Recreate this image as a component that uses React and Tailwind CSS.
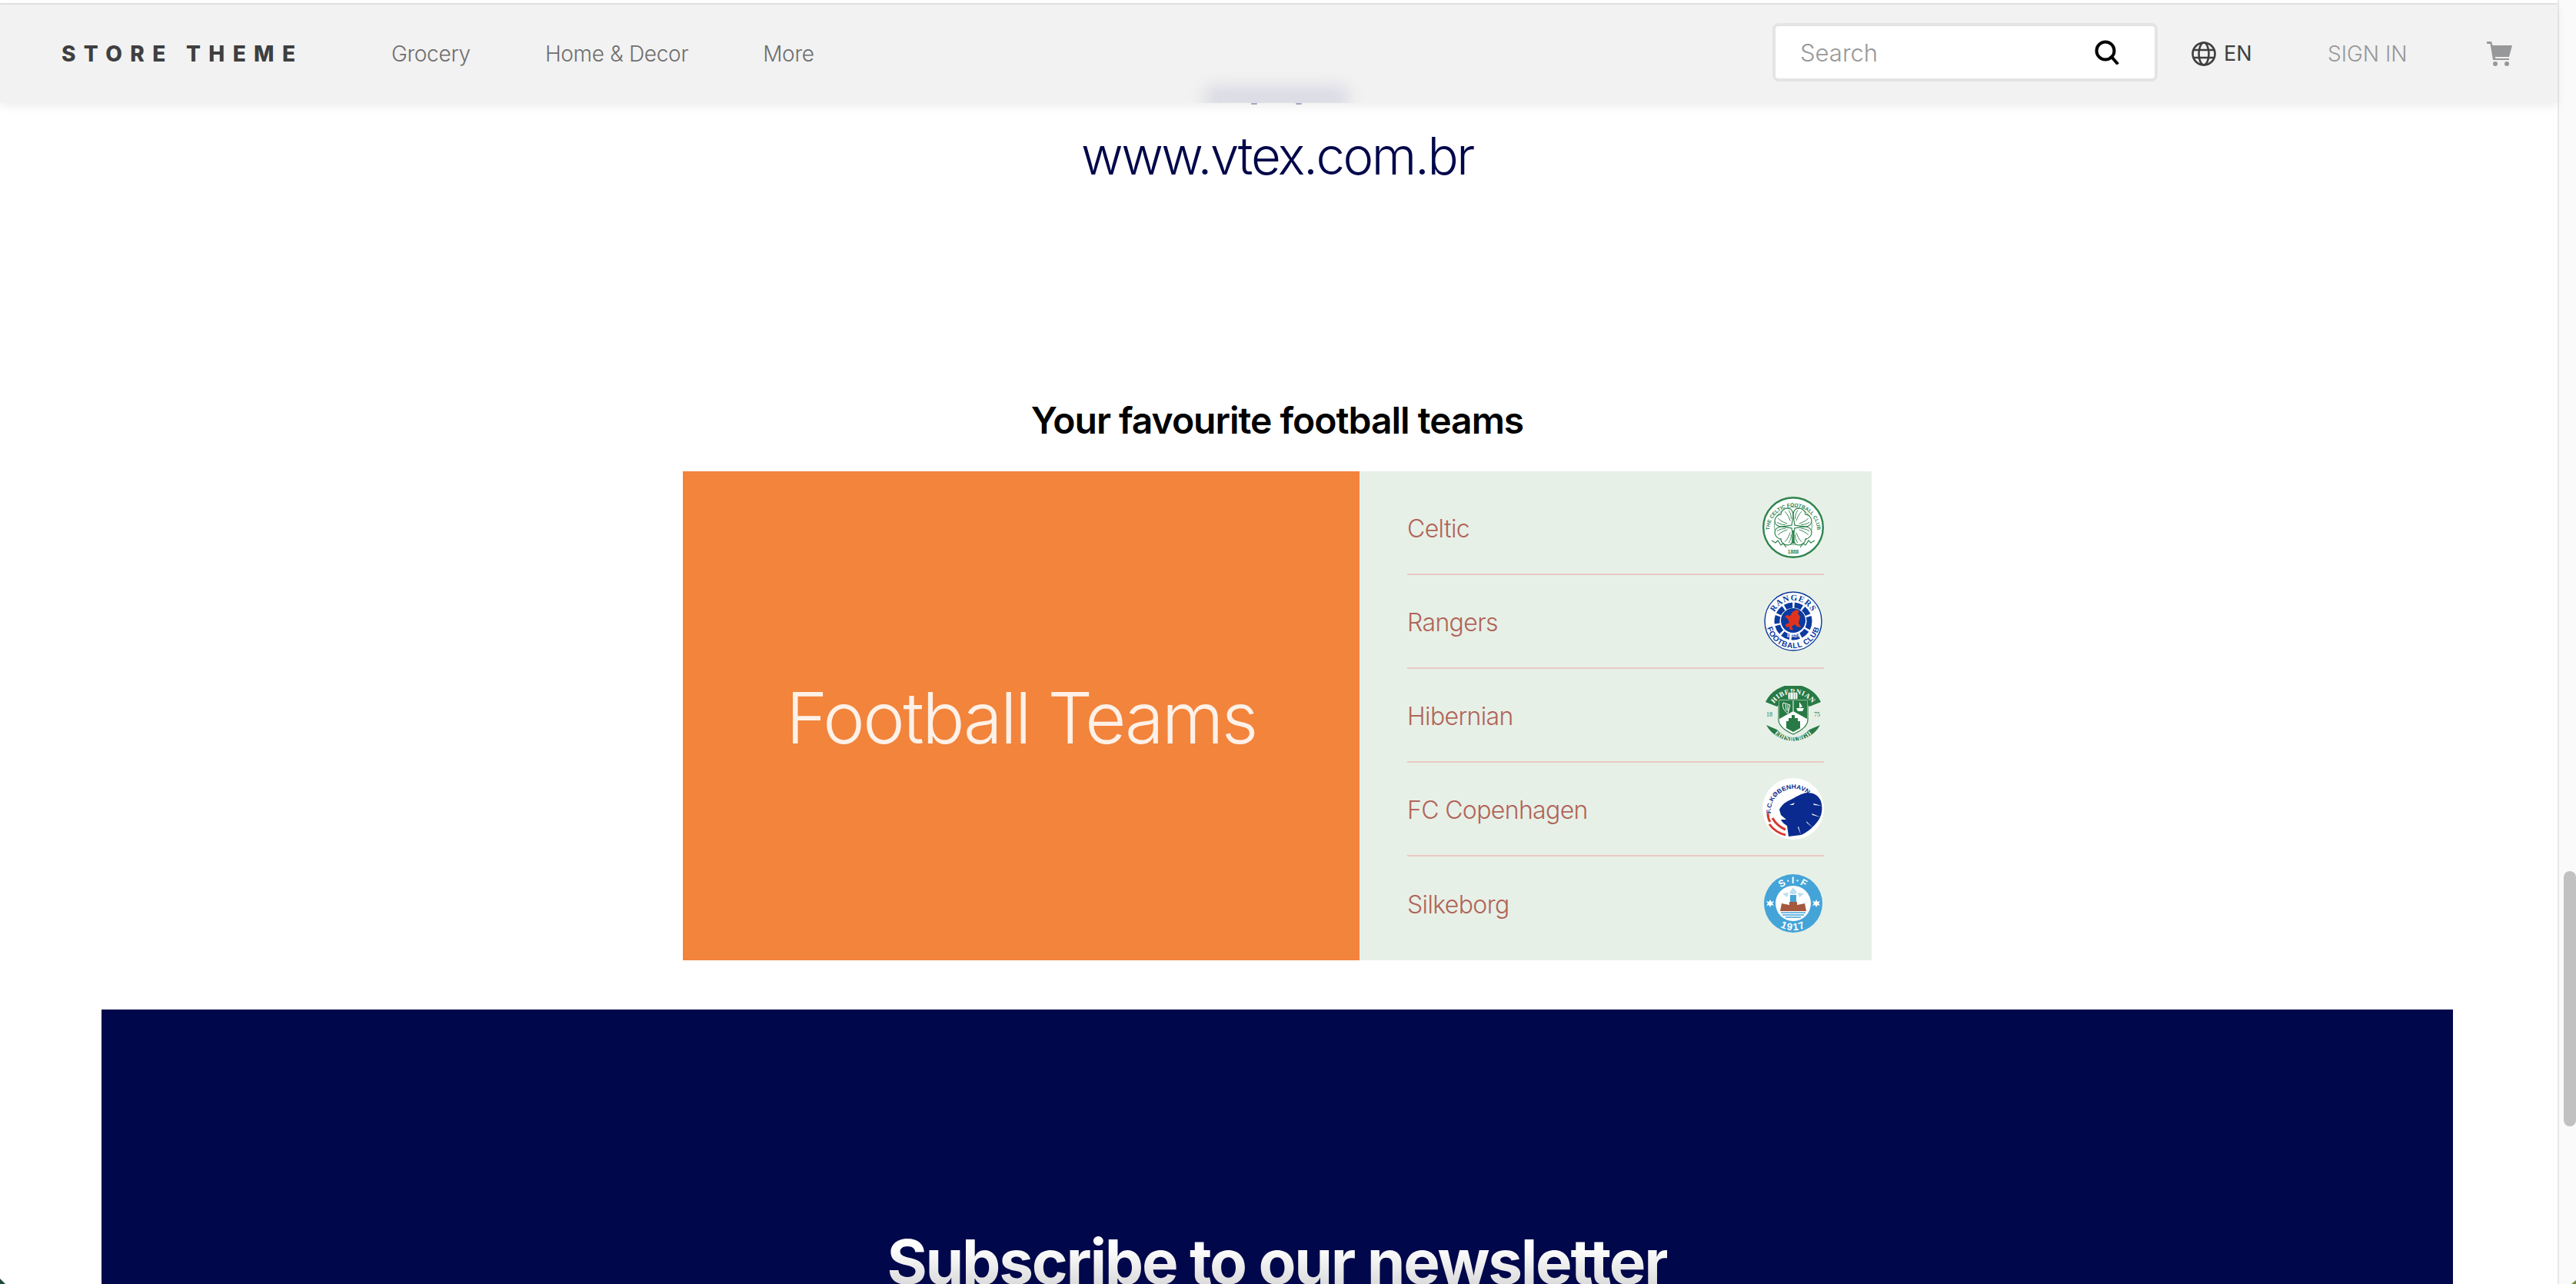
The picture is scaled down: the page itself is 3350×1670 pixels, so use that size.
const font = { fontFamily: 'Inter, "Liberation Sans", sans-serif' }

const navLinks = ['Grocery', 'Home & Decor', 'More']

function CelticLogo() {
  const green = '#2f8450'
  return (
    <svg viewBox="0 0 80 80" className="w-[80px] h-[80px]">
      <defs>
        <path id="celticTop" d="M 9 44 A 31 31 0 1 1 71 44" />
      </defs>
      <circle cx="40" cy="40" r="38.8" fill="#fff" stroke={green} strokeWidth="2.4" />
      <circle cx="40" cy="38" r="24.5" fill="#fff" stroke={green} strokeWidth="0.7" />
      <text fontSize="6.6" fontWeight="700" fill={green} fontFamily="Liberation Sans"><textPath href="#celticTop" startOffset="50%" textAnchor="middle">THE CELTIC FOOTBALL CLUB</textPath></text>
      <text x="40" y="74" textAnchor="middle" fontSize="6.5" fontWeight="700" fill={green} fontFamily="Liberation Sans">1888</text>
      {[-45, 45, 135, -135].map(r => (
        <g key={r} transform={`translate(40 39) rotate(${r}) scale(0.9)`} fill="#fff" stroke={green} strokeWidth="1.3">
          <path d="M0 -3 C-6 -8 -17 -13 -15 -21 C-13 -28 -4 -29 0 -25 C4 -29 13 -28 15 -21 C17 -13 6 -8 0 -3 Z" />
          <path d="M-3 -9 C-5 -14 -7 -18 -7 -24 M3 -9 C5 -14 7 -18 7 -24 M-6 -10 C-9 -13 -11 -16 -12 -21 M6 -10 C9 -13 11 -16 12 -21" fill="none" strokeWidth="1" />
        </g>
      ))}
      <path d="M38.8 44 L38 61 L42 61 L41.2 44 Z" fill={green} />
      <path d="M12 57 L17 60 L20 57 L24 63 L27 61 L31 66 M68 57 L63 60 L60 57 L56 63 L53 61 L49 66" fill="none" stroke={green} strokeWidth="1.2" />
    </svg>
  )
}

function RangersLogo() {
  const blue = '#0b3a9e'
  return (
    <svg viewBox="0 0 76 78" className="w-[76px] h-[78px]">
      <defs>
        <path id="rangersTop" d="M 11 39 A 27 27 0 0 1 65 39" />
        <path id="rangersBottom" d="M 3 39 A 35 35 0 0 0 73 39" />
      </defs>
      <ellipse cx="38" cy="39" rx="37" ry="38" fill="#fff" stroke={blue} strokeWidth="1.4" />
      <text fontSize="11" fontWeight="700" fill={blue} fontFamily="Liberation Serif" letterSpacing="1"><textPath href="#rangersTop" startOffset="50%" textAnchor="middle">RANGERS</textPath></text>
      <text fontSize="10" fontWeight="700" fill={blue} fontFamily="Liberation Sans" letterSpacing="0.6"><textPath href="#rangersBottom" startOffset="50%" textAnchor="middle">FOOTBALL CLUB</textPath></text>
      <circle cx="38" cy="39" r="21" fill="none" stroke={blue} strokeWidth="7" strokeDasharray="10 2.5" />
      <circle cx="38" cy="38" r="16" fill={blue} />
      <path d="M42 24 L46 26 L44 29 L47 33 L45 41 L48 47 L43 46 L40 43 L36 46 L38 50 L33 50 L33 46 L29 47 L28 43 L33 41 L31 36 L27 33 L30 31 L34 32 L37 27 Z" fill="#e0331f" />
      <text x="38" y="60" textAnchor="middle" fontSize="4.6" fontWeight="700" fill="#fff" fontFamily="Liberation Sans">READY</text>
    </svg>
  )
}

function HibernianLogo() {
  const green = '#277a45'
  return (
    <svg viewBox="0 0 74 76" className="w-[74px] h-[76px]">
      <defs>
        <path id="hibsTop" d="M 7 40 A 30 30 0 0 1 67 40" />
        <path id="hibsBottom" d="M 1 36 A 36 36 0 0 0 73 36" />
      </defs>
      <path d="M1 21 A 40 40 0 0 1 73 21 L58 27 A 27 27 0 0 0 16 27 Z" fill={green} />
      <path d="M2 51 L16 57 A 27 27 0 0 0 58 57 L72 51 A 40 40 0 0 1 2 51 Z" fill={green} />
      <text fontSize="9" fontWeight="700" fill="#fff" fontFamily="Liberation Serif" letterSpacing="0.7"><textPath href="#hibsTop" startOffset="50%" textAnchor="middle">HIBERNIAN</textPath></text>
      <text fontSize="8" fontWeight="700" fill="#fff" fontFamily="Liberation Serif" letterSpacing="0.5"><textPath href="#hibsBottom" startOffset="50%" textAnchor="middle">EDINBURGH</textPath></text>
      <text x="6" y="40" textAnchor="middle" fontSize="8" fill={green} fontFamily="Liberation Serif">18</text>
      <text x="68" y="40" textAnchor="middle" fontSize="8" fill={green} fontFamily="Liberation Serif">75</text>
      <path d="M18 18 L56 18 L56 44 C56 53 46 59 37 63 C28 59 18 53 18 44 Z" fill="#fff" stroke={green} strokeWidth="1.2" />
      <path d="M19 19 L55 19 L55 43 L37 33 L19 43 Z" fill={green} />
      <path d="M36.5 19 H37.5 V33 H36.5 Z" fill="#fff" />
      <path d="M24 22 C22 28 26 33 30 36 L33 25 Z M27 24 L28 32 M30 25 L30 33" fill="none" stroke="#fff" strokeWidth="1" />
      <path d="M41 29 L51 29 L49 33 L43 33 Z M45 21 L45 29 L49 27 Z" fill="#fff" />
      <path d="M28 46 L31 46 L31 42 L35 42 L35 38 L39 38 L39 42 L43 42 L43 46 L46 46 L46 55 L37 60 L28 55 Z" fill={green} />
      <rect x="30" y="8" width="13" height="10" rx="2" fill="#fff" stroke={green} strokeWidth="1" />
      <path d="M33 8 V18 M37 8 V18 M40 8 V18" stroke={green} strokeWidth="0.7" />
    </svg>
  )
}

function CopenhagenLogo() {
  const blue = '#0a2a8f'
  return (
    <svg viewBox="0 0 80 80" className="w-[80px] h-[80px]">
      <defs>
        <path id="fckTop" d="M 11 46 A 29 29 0 0 1 69 40" />
      </defs>
      <circle cx="40" cy="40" r="40" fill="#fff" />
      <text fontSize="8" fontWeight="700" fill={blue} fontFamily="Liberation Sans"><textPath href="#fckTop" textLength="70" lengthAdjust="spacingAndGlyphs">F.C.KØBENHAVN</textPath></text>
      <path d="M58 19 C66 19 73 22 76 30 C79 40 77 50 72 56 C66 64 58 71 50 74 L34 76 L32 62 C29 60 25 57 24 54 L31 54 L24 48 L22 41 C25 35 30 31 35 29 C43 25 50 20 58 19 Z" fill={blue} />
      <path d="M35 35 L42 32 L40 35 Z M66 33 L77 36 L67 35 Z M64 46 L76 51 L65 48 Z M57 56 L66 65 L57.5 58 Z M47 63 L50 74 L46 64 Z" fill="#fff" />
      <path d="M7 46 C7 49 8 54 10 57 M13 52 C17 59 23 64 30 67 M9 60 C14 67 22 72 30 74" stroke="#d63a2f" strokeWidth="3" fill="none" />
    </svg>
  )
}

function SilkeborgLogo() {
  return (
    <svg viewBox="0 0 76 76" className="w-[76px] h-[76px]">
      <defs>
        <path id="sifTop" d="M 12 38 A 26 26 0 0 1 64 38" />
        <path id="sifBottom" d="M 3 38 A 35 35 0 0 0 73 38" />
      </defs>
      <circle cx="38" cy="38" r="38" fill="#44a4d8" />
      <circle cx="38" cy="38" r="23" fill="#fff" />
      <text fontSize="12.5" fontWeight="700" fill="#fff" fontFamily="Liberation Sans" letterSpacing="1.5"><textPath href="#sifTop" startOffset="50%" textAnchor="middle">S·I·F</textPath></text>
      <text fontSize="13" fontWeight="700" fill="#fff" fontFamily="Liberation Sans" letterSpacing="1.5"><textPath href="#sifBottom" startOffset="50%" textAnchor="middle">1917</textPath></text>
      <path d="M8 33 L9.5 36 L13 35 L11 38 L13 41 L9.5 40 L8 43 L6.5 40 L3 41 L5 38 L3 35 L6.5 36 Z" fill="#fff" />
      <path d="M68 33 L69.5 36 L73 35 L71 38 L73 41 L69.5 40 L68 43 L66.5 40 L63 41 L65 38 L63 35 L66.5 36 Z" fill="#fff" />
      <path d="M38 17 L43 24 L40 26 L36 26 L33 24 Z M24 25 L32 24 L30 30 Z M52 25 L44 24 L46 30 Z" fill="#b9def2" />
      <rect x="34" y="27" width="8" height="9" fill="#44a4d8" />
      <path d="M23 38 L33 40 L33 36 L43 36 L43 40 L53 38 L55 48 L21 48 Z" fill="#a4593f" />
      <path d="M22 50 H54 M24 53 H52 M28 56 H48" stroke="#44a4d8" strokeWidth="1.5" />
    </svg>
  )
}

const teams = [
  { name: 'Celtic', logo: <CelticLogo /> },
  { name: 'Rangers', logo: <RangersLogo /> },
  { name: 'Hibernian', logo: <HibernianLogo /> },
  { name: 'FC Copenhagen', logo: <CopenhagenLogo /> },
  { name: 'Silkeborg', logo: <SilkeborgLogo /> },
]

function Header() {
  return (
    <header className="relative z-10 h-[128px] shrink-0 bg-[#f2f2f2] flex items-center pl-[80px] pr-[59px] shadow-[0_4px_12px_rgba(0,0,0,0.07)]">
      <div className="absolute inset-0 overflow-hidden">
        <div className="absolute left-[1565px] w-[190px] -bottom-[8px] h-[30px] bg-[#d9dae3] blur-[10px] rounded-full" />
      </div>
      <div className="absolute left-[1627px] -bottom-[2px] flex gap-[50px]">
        <span className="w-[8px] h-[2px] bg-[#a3a6c4] rounded-full" />
        <span className="w-[8px] h-[2px] bg-[#a3a6c4] rounded-full" />
      </div>
      <span className="relative w-[429px] text-[28px] font-extrabold tracking-[0.37em] text-[#3f3f40] whitespace-nowrap">STORE THEME</span>
      <nav className="relative flex gap-[97px] text-[28px] font-light tracking-[-0.3px] text-[#6f6f6f]">
        {navLinks.map(l => <span key={l}>{l}</span>)}
      </nav>
      <div className="relative ml-auto flex items-center">
        <div className="w-[501px] h-[76px] mb-[4px] bg-white border-[4px] border-[#e3e4e6] rounded-[8px] flex items-center justify-between pl-[32px] pr-[46px]">
          <span className="pt-[3px] text-[31px] font-light text-[#979899]">Search</span>
          <svg viewBox="0 0 32 32" className="w-[32px] h-[32px]" fill="none" stroke="#000" strokeWidth="4">
            <circle cx="14" cy="14" r="11.5" />
            <path d="M22 22 L29 30" strokeLinecap="square" />
          </svg>
        </div>
        <svg viewBox="0 0 32 32" className="w-[32px] h-[32px] ml-[44px]" fill="none" stroke="#3f3f40" strokeWidth="2.6">
          <circle cx="16" cy="16" r="14.5" />
          <ellipse cx="16" cy="16" rx="6.5" ry="14.5" />
          <path d="M2 11 H30 M2 21 H30" />
        </svg>
        <span className="ml-[10px] w-[135px] text-[27px] font-normal text-[#3f3f40]">EN</span>
        <span className="w-[207px] text-[28px] font-light text-[#979899]">SIGN IN</span>
        <svg viewBox="0 0 33 32" className="w-[33px] h-[32px]" fill="#979899">
          <path d="M0 0 H6 L7.5 5 H33 L29 20 H10.5 L11.5 22 H29 V24 H8 L4.5 3 H0 Z" />
          <circle cx="11" cy="29" r="3" />
          <circle cx="26" cy="29" r="3" />
        </svg>
      </div>
    </header>
  )
}

function TeamRow({ team, last }) {
  return (
    <li className={`h-[122px] flex items-center justify-between ${last ? '' : 'border-b-2 border-[#e9c9c5]'}`}>
      <span className="pt-[4px] text-[32px] font-[350] tracking-[-0.02em] text-[#b0645a]">{team.name}</span>
      <span className="w-[80px] flex justify-center">{team.logo}</span>
    </li>
  )
}

export default function App() {
  return (
    <div className="relative h-[1670px] overflow-hidden flex bg-white" style={font}>
      <div className="w-[3326px] flex flex-col">
        <div className="h-[6px] shrink-0 border-b-2 border-[#e3e3e3]" />
        <Header />
        <main className="shrink-0 flex flex-col items-center pr-[4px]">
          <p className="mt-[26px] text-[67px] font-light leading-[86px] tracking-[-2.4px] text-[#00074a]">www.vtex.com.br</p>
          <h2 className="mt-[272px] text-[48px] font-semibold leading-[58px] tracking-[-1px] text-black">Your favourite football teams</h2>
          <section className="mt-[37px] w-[1546px] h-[636px] flex">
            <div className="w-[880px] bg-[#f2843c] flex items-center justify-center">
              <span className="pt-[6px] text-[92px] font-[350] tracking-[-0.027em] text-[#fdf1e8]">Football Teams</span>
            </div>
            <ul className="flex-1 bg-[#e7f0e6] px-[62px] py-[13px]">
              {teams.map((t, i) => <TeamRow key={t.name} team={t} last={i === teams.length - 1} />)}
            </ul>
          </section>
          <section className="mt-[64px] w-[3058px] h-[400px] bg-[#00074a] flex justify-center pt-[280px]">
            <h2 className="h-[96px] text-[80px] font-bold leading-[96px] tracking-[-2.3px] whitespace-nowrap bg-linear-to-b from-white from-30% to-[#dcdcdc] to-80% bg-clip-text text-transparent">Subscribe to our newsletter</h2>
          </section>
        </main>
      </div>
      <aside className="w-[24px] bg-[#fafafa] border-l-2 border-[#e8e8e8] pl-[6px] pt-[1133px]">
        <div className="w-[16px] h-[332px] rounded-full bg-[#c1c1c1]" />
      </aside>
      {/* window corners */}
      <svg viewBox="0 0 7 7" className="absolute left-0 bottom-0 w-[7px] h-[7px]"><path d="M0 0 L7 7 H0 Z" fill="#1d4a3a" /></svg>
      <svg viewBox="0 0 6 5" className="absolute right-0 bottom-0 w-[6px] h-[5px]"><path d="M6 0 L0 5 H6 Z" fill="#6f8f3a" /></svg>
    </div>
  )
}
